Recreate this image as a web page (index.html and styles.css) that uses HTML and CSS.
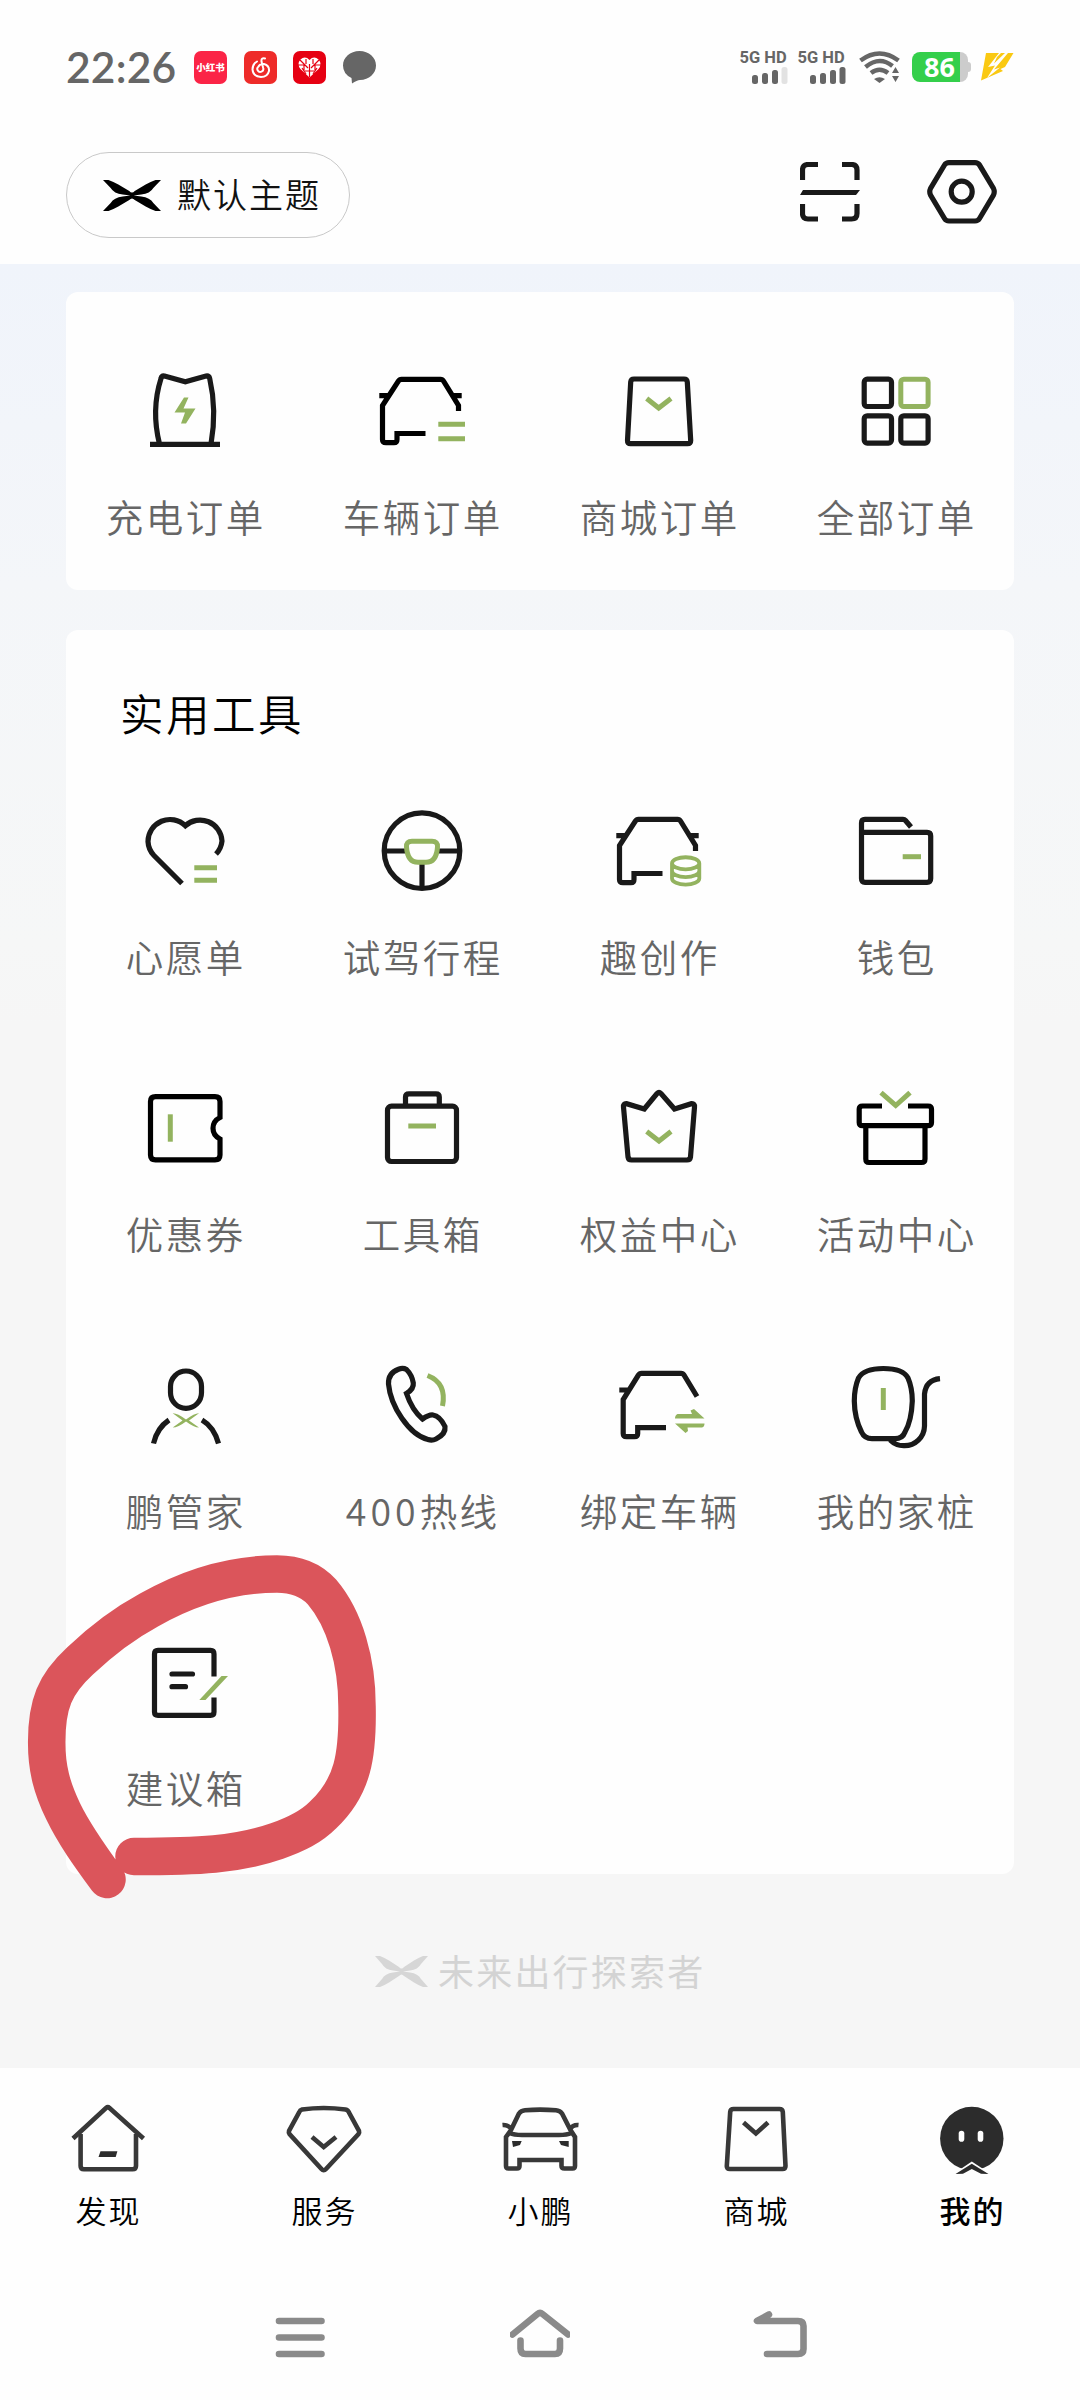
FILE: index.html
```html
<!DOCTYPE html>
<html lang="zh-CN">
<head>
<meta charset="utf-8">
<title>我的</title>
<link rel="stylesheet" href="styles.css">
</head>
<body>
<div class="screen">
  <header class="header">
    <div class="status">
      <span class="clock">22:26</span>
      <div class="notices">
        <span class="app app-note">小红书</span>
        <span class="app app-music"><svg width="33" height="33" viewBox="0 0 33 33"><path d="M21 7.5Q17 6.500 17.500 10.500L19.200 17A3 3 0 1 1 14.500 15.500Q16 12.500 20 13Q25.500 14.500 25 20Q23.500 26 17 26Q9 25.500 8.500 18.500Q8.500 13 13 10.500" class="app-line"/></svg></span>
        <span class="app app-heart"><svg width="33" height="33" viewBox="0 0 33 33"><path d="M16.500 9Q12 4.500 7.500 8.500Q3.500 13 7.500 18L16.500 26.500L25.500 18Q29.500 13 25.500 8.500Q21 4.500 16.500 9Z" fill="#fff"/><path d="M7 9L15 17M26 9L18 17M5 14H11V20M28 14H22V20M13 8V13M20 8V13M16.500 13V26M12 20H21M9 17L13 23M24 17L20 23" stroke="#e60012" stroke-width="1.200" fill="none"/></svg></span>
        <svg width="33" height="33" viewBox="0 0 33 33"><path d="M16.500 0C26 0 33 6.500 33 14.500S26 29 17 29Q14 29 9 32.500L8.500 27Q0 23 0 14.500C0 6.500 7 0 16.500 0Z" fill="#666"/></svg>
      </div>
      <div class="signals">
        <div class="sim"><span>5G HD</span><svg width="36" height="17" viewBox="0 0 36 17"><g fill="#666"><rect x="0" y="8" width="6" height="9" rx="2.500"/><rect x="10" y="6" width="6" height="11" rx="2.500"/><rect x="20" y="3" width="6" height="14" rx="2.500"/></g><rect x="29.500" y="0" width="6" height="17" rx="2.500" fill="#e2e2e2"/></svg></div>
        <div class="sim"><span>5G HD</span><svg width="36" height="17" viewBox="0 0 36 17"><g fill="#666"><rect x="0" y="8" width="6" height="9" rx="2.500"/><rect x="10" y="6" width="6" height="11" rx="2.500"/><rect x="20" y="3" width="6" height="14" rx="2.500"/><rect x="29.500" y="0" width="6" height="17" rx="2.500"/></g></svg></div>
        <svg class="wifi" width="42" height="32" viewBox="0 0 42 32"><g fill="none" stroke="#666" stroke-width="4.500"><path d="M1.500 9.500Q20.500 -4.500 39.500 9.500"/><path d="M6.500 16Q20.500 4.500 33.500 15"/><path d="M12 22Q20.500 15.500 29 22"/></g><path d="M15 28Q20.500 24.500 26 28L20.500 32ZM36.500 16L40 22H33ZM36.500 31L33 25H40Z" fill="#666"/></svg>
        <div class="battery"><span>86</span></div>
        <svg width="34" height="28" viewBox="0 0 34 28"><path d="M5 0H32.500L24 14L19.500 16L22 18L0 27.500Z" fill="#fac912"/><path d="M18 0L7 14L14 12.500L6 25L19 14.500L13 16.500L27 0H24L13 10.500L16 4L20 0Z" fill="#fefefe"/></svg>
      </div>
    </div>
    <div class="toolbar">
      <button class="theme"><svg width="58" height="31" viewBox="0 0 53 31" preserveAspectRatio="none"><path d="M0 0H5Q10 2 14 4.500L24 11Q26.500 14 29 11L39 4.500Q43 2 48 0H53L46 8Q43 13.500 35 14.500L28 15.500L35 16.500Q43 17.500 46 23L53 31H48Q43 29 39 26.500L29 20Q26.500 17 24 20L14 26.500Q10 29 5 31H0L7 23Q10 17.500 18 16.500L25 15.500L18 14.500Q10 13.500 7 8Z"/></svg><span>默认主题</span></button>
      <svg class="scan" width="60" height="60" viewBox="0 0 60 60"><path d="M2.500 18V8Q2.500 2.500 8 2.500H18M42 2.500H51.500Q57 2.500 57 8V18M57 42V51.500Q57 57 51.500 57H42M18 57H8Q2.500 57 2.500 51.500V42"/><path class="solid" d="M0 33L3 28H60L56 33Z"/></svg>
      <svg class="settings" width="70" height="64" viewBox="0 0 70 64"><path d="M22 2.600H48Q51 2.600 52.500 5L66.500 28.500Q68 31.700 66.500 35L52.500 58.500Q51 61 48 61H22Q19 61 17.500 58.500L3.500 35Q2 31.700 3.500 28.500L17.500 5Q19 2.600 22 2.600Z"/><circle cx="34.700" cy="31.700" r="10.500"/></svg>
    </div>
  </header>

  <main class="content">
    <section class="card orders">
      <div class="grid">
        <div class="cell"><svg class="icon" viewBox="0 0 101 100"><path d="M25.500 82Q17 48 27 16.500Q27.700 13.500 30.500 14L51.300 19.700L72 14Q75 13.500 75.700 16.500Q83 48 77 82M16 82.300H86"/><path class="gf" d="M50 35.500H54.500L49.500 46.500H61.500L52 61.500H47L51 50.500H40.500Z"/></svg><span>充电订单</span></div>
        <div class="cell"><svg class="icon black" viewBox="0 0 101 100"><path d="M87.500 49V43.500L72.500 19Q71.500 17.300 69.500 17.300H30.500Q28.500 17.300 27.500 19L11.500 43.500V77.500Q11.500 80.700 15 80.700H23Q26 80.700 26 77.500V71.500H54.500M8.300 33.700H18M81 33.700H90.700"/><path class="g" d="M67.300 62.300H94M67.300 76.700H94"/></svg><span>车辆订单</span></div>
        <div class="cell"><svg class="icon" viewBox="0 0 101 100"><path d="M26 17H76Q79 17 79.300 20L82.700 78.500Q82.700 81.700 79.500 81.700H22.500Q19.300 81.700 19.500 78.500L22.700 20Q23 17 26 17Z"/><path class="g" d="M38.700 36.500L50.700 46L63 36.500"/></svg><span>商城订单</span></div>
        <div class="cell"><svg class="icon" viewBox="0 0 101 100"><rect x="19.200" y="17.200" width="27.300" height="27.300" rx="3"/><rect class="g" x="55.800" y="17.200" width="27.300" height="27.300" rx="3"/><rect x="19.200" y="53.800" width="27.300" height="27.300" rx="3"/><rect x="55.800" y="53.800" width="27.300" height="27.300" rx="3"/></svg><span>全部订单</span></div>
      </div>
    </section>

    <section class="card tools">
      <h2>实用工具</h2>
      <div class="grid">
        <div class="cell"><svg class="icon" viewBox="0 0 101 100"><path d="M82 52A22 22 0 0 0 88 39A22 22 0 0 0 51.300 23.700A22 22 0 0 0 14 39.500A22 22 0 0 0 20 53.500L48 81.500"/><path class="g" d="M60.300 65.700H83M60.300 78.300H83"/></svg><span>心愿单</span></div>
        <div class="cell"><svg class="icon" viewBox="0 0 101 100"><circle cx="51" cy="48.700" r="37.800"/><path d="M14 49H35M67 49H88M51 61V86"/><path class="g" d="M41 39.300H61Q67 39.300 66.500 45Q65.500 60.300 55 60.300H47Q36.500 60.300 35.500 45Q35 39.300 41 39.300Z"/></svg><span>试驾行程</span></div>
        <div class="cell"><svg class="icon" viewBox="0 0 101 100"><path d="M87.500 49V43.500L72.500 19Q71.500 17.300 69.500 17.300H30.500Q28.500 17.300 27.500 19L11.500 43.500V77.500Q11.500 80.700 15 80.700H23Q26 80.700 26 77.500V71.500H54.500M8.300 33.700H18M81 33.700H90.700"/><path class="g coins" d="M64 61.300A13.500 6 0 0 1 91.300 61.300A13.500 6 0 0 1 64 61.300V76.500A13.500 6 0 0 0 91.300 76.500V61.300M64 69A13.500 6 0 0 0 91.300 69"/></svg><span>趣创作</span></div>
        <div class="cell"><svg class="icon" viewBox="0 0 101 100"><path d="M66 25L60.500 18.500Q59.500 17.300 58 17.300H20Q16.500 17.300 16.500 21V76.500Q16.500 80.300 20 80.300H82Q85.700 80.300 85.700 76.500V34Q85.700 30.300 82 30.300H17"/><path class="g" d="M57.700 54.700H76"/></svg><span>钱包</span></div>

        <div class="cell"><svg class="icon black" viewBox="0 0 101 100"><path d="M21.500 17.700H81Q86 17.700 86 22.500V38.500Q79 42 79 49.300Q79 56.500 86 60V76Q86 80.800 81 80.800H21.500Q16.500 80.800 16.500 76V22.500Q16.500 17.700 21.500 17.700Z"/><path class="g" d="M36.300 35.300V62.700"/></svg><span>优惠券</span></div>
        <div class="cell"><svg class="icon" viewBox="0 0 101 100"><rect x="16.500" y="27.200" width="69" height="55.300" rx="4"/><path d="M34.500 27V18Q34.500 14.800 38 14.800H65Q68.300 14.800 68.300 18V27"/><path class="g" d="M37.300 47H65"/></svg><span>工具箱</span></div>
        <div class="cell"><svg class="icon" viewBox="0 0 101 100"><path d="M49 14.500Q51 12.500 53 14.500L66.500 30L83.500 24.700Q87 24.500 86.500 28L82.500 78Q82 81 79 81H23.500Q20.500 81 20 78L15.500 28Q15 24.500 18.500 24.700L36.300 30Z"/><path class="g" d="M38.700 52.500L51 62L63 52.500"/></svg><span>权益中心</span></div>
        <div class="cell"><svg class="icon black" viewBox="0 0 101 100"><path d="M37 27H17.500Q14.200 27 14.200 30V43.500Q14.200 46.700 17.500 46.700H83Q86.500 46.700 86.500 43.500V30Q86.500 27 83 27H63M20.800 47V80Q20.800 83.500 24 83.500H76.500Q80 83.500 80 80V47"/><path class="g" d="M36 13.700L50.700 26.500L65 13.700"/></svg><span>活动中心</span></div>

        <div class="cell"><svg class="icon" viewBox="0 0 101 100"><rect x="36.500" y="15" width="31" height="37.300" rx="15.500"/><path d="M35 64Q23 72 19.500 87.500M68 64Q80 71 84.500 87.500"/><path class="gf" d="M38.700 57.300Q43 57 52 63.500Q61 57 65 57.300L55 64.500L65 71.500Q60 71.500 52 65.500Q44 71.500 38.700 71.500L48.500 64.500Z"/></svg><span>鹏管家</span></div>
        <div class="cell"><svg class="icon" viewBox="0 0 101 100"><path d="M27.500 13.200Q17 17 17.500 28C19.500 50 38 79 57 83.500Q61 85 65 83Q75 78 74 70.500Q69 60 62 59Q58 58.500 51.500 63Q41 54 35.500 37.500Q43 33 42.300 27Q41 19 35.500 13.500Q32 11.500 27.500 13.200Z"/><path class="g" d="M56.500 19.500Q76 27 71.500 50"/></svg><span><b class="digits">400</b>热线</span></div>
        <div class="cell"><svg class="icon" viewBox="0 0 101 100"><path d="M89 40.500L76 19Q75 17.300 73 17.300H33.500Q31.500 17.300 30.500 19L15.200 43.500V77.500Q15.200 80.700 18.500 80.700H26.500Q29.700 80.700 29.700 77.500V71.700H58M11.300 34H21"/><path class="gf" d="M69.500 58H84L82.500 54.500L86 53L96.500 62.500H67Q67 59 69.500 58ZM67 67.500H96.500Q96.500 71 94 71.500H79.500L80 75L77.500 77Z"/></svg><span>绑定车辆</span></div>
        <div class="cell"><svg class="icon" viewBox="0 0 101 100"><path d="M38.300 12.500C53 12.500 60 16 63 22Q67.300 32 67.300 45Q66.500 65 60 76Q57.500 82.700 50 82.700H27Q19.500 82.700 16.500 76Q9.500 62 9.300 45Q9.300 32 13.500 22C17 16 24 12.500 38.300 12.500Z"/><path d="M45 84Q51 89.800 59 89.700A20 20 0 0 0 79.500 70V38Q81 24 95 22.700"/><path class="g" d="M38.300 32V54"/></svg><span>我的家桩</span></div>

        <div class="cell"><svg class="icon" viewBox="0 0 101 100"><path d="M80 43.500V21Q80 17.300 76.500 17.300H24Q20.500 17.300 20.500 21V79Q20.500 82.300 24 82.300H76.500Q80 82.300 80 79V64.500"/><path d="M38 41H58.500M38 53.700H51.500" stroke-linecap="round"/><path class="gf" d="M65.300 67L87.500 43H94L71.500 67Z"/></svg><span>建议箱</span></div>
      </div>
      <svg class="marker" width="380" height="370" viewBox="10 1540 380 370"><path d="M107 1879.500C89 1855 74 1834 63 1811C52 1788 46.700 1769 46.700 1743C46.500 1704 55 1684 80 1661C100 1642 125 1623 149 1610C193 1585 237 1574 277 1574C296 1574 311 1580 322 1592C345 1619 357 1662 357 1706C358 1755 353 1787 323 1815C311 1827 297 1834 277 1841C237 1855 198 1856.500 134 1856.500"/></svg>
    </section>

    <div class="slogan"><svg width="53" height="31" viewBox="0 0 53 31"><path d="M0 0H5Q10 2 14 4.500L24 11Q26.500 14 29 11L39 4.500Q43 2 48 0H53L46 8Q43 13.500 35 14.500L28 15.500L35 16.500Q43 17.500 46 23L53 31H48Q43 29 39 26.500L29 20Q26.500 17 24 20L14 26.500Q10 29 5 31H0L7 23Q10 17.500 18 16.500L25 15.500L18 14.500Q10 13.500 7 8Z"/></svg><span>未来出行探索者</span></div>
  </main>

  <nav class="tabs">
    <div class="tab"><svg viewBox="0 0 80 76"><path d="M12.600 34V66Q12.600 69.300 16 69.300H64.500Q68 69.300 68 66V34"/><path d="M5 38.500L38 8Q39.800 6.500 41.500 8L75.500 38.500"/><path class="solid" d="M30.500 57L32.500 51.300H49.400L47.700 57Z"/></svg><span>发现</span></div>
    <div class="tab"><svg viewBox="0 0 80 76"><path d="M18 9.500Q39.700 6.500 61.500 9.500Q64 10 65 12.500L75 31Q75.500 32.500 74.500 34L42 69Q39.700 71.500 37.500 69L5.500 34Q4.500 32.500 5 31L15 12.500Q16 10 18 9.500Z"/><path d="M28 37L39.700 47L52 37"/></svg><span>服务</span></div>
    <div class="tab"><svg viewBox="0 0 80 76"><path d="M11 30L19 13.500Q21 10.500 25 10.200Q40 9 56 10.200Q60 10.500 62 13.500L70.500 30L75 37V66Q75 68.500 72.500 68.500H64.500Q61.500 68.500 61.500 66V60H19.500V66Q19.500 68.500 17 68.500H8.500Q6 68.500 6 66V37Z"/><path d="M9.500 33Q14 35 22 35H59Q67 35 71.500 33M11.500 29Q8 24.500 2.500 25M70 29Q73 24.500 78.500 25"/><path class="solid" d="M12 41H21.700L20 45L13 47ZM59 41H68.700V47L61 45Z"/></svg><span>小鹏</span></div>
    <div class="tab"><svg viewBox="0 0 80 76"><path d="M17.500 9H63.500Q66.500 9 66.800 12L69.500 66Q69.500 69 66.500 69H13.800Q10.700 69 10.800 66L14.200 12Q14.500 9 17.500 9Z"/><path d="M27.500 22.500L39.900 33.500L52 22.500"/></svg><span>商城</span></div>
    <div class="tab active"><svg viewBox="0 0 80 76"><circle class="solid" cx="39.800" cy="38.500" r="31.700"/><path class="eye" d="M22 73.500L39.800 61.500L58 73.500V76H22Z"/><path class="chin" d="M23.500 74L39.800 63.800L56.500 74L49 73.700L39.800 69L31 73.700Z"/><rect class="eye" x="26.700" y="30.700" width="5.600" height="11" rx="2.800"/><rect class="eye" x="45.700" y="30.700" width="5.600" height="11" rx="2.800"/></svg><span>我的</span></div>
  </nav>

  <div class="sysnav">
    <svg width="60" height="60" viewBox="0 0 60 60"><path d="M9 16H51.500M9 32.500H51.500M9 49H51.500"/></svg>
    <svg width="60" height="60" viewBox="0 0 60 60"><path d="M2.500 29.500L27.500 9Q30 7 32.500 9L58 29.500M10.500 35.500V43.500Q10.500 49 15.500 49H45Q50 49 50 43.500V35.500"/></svg>
    <svg width="60" height="60" viewBox="0 0 60 60"><path d="M19 9.500L7 16H48Q53.500 16 53.500 21V44Q53.500 49 48 49H17"/></svg>
  </div>
</div>
</body>
</html>
```
FILE: styles.css
```css
* { box-sizing: border-box; }
body {
  margin: 0;
  font-family: "Noto Sans", "Noto Sans CJK SC", sans-serif;
  color: #000;
}
svg { display: block; flex: none; }
.screen {
  width: 1080px;
  height: 2400px;
  display: flex;
  flex-direction: column;
  background: #fefefe;
}

/* header */
.header { height: 264px; padding: 46px 0 0 66px; }
.status { display: flex; align-items: center; height: 42px; }
.clock {
  width: 128px;
  font: 600 42.500px/42px Lato, sans-serif;
  color: #666;
  letter-spacing: .2px;
}
.notices { display: flex; gap: 16.5px; align-items: center; }
.app {
  display: flex;
  align-items: center;
  justify-content: center;
  width: 33px;
  height: 33px;
  border-radius: 7px;
}
.app-note { background: #fb2446; color: #fff; font: 900 9.500px/33px "Noto Sans CJK SC", sans-serif; white-space: nowrap; }
.app-music { background: #ee2b29; }
.app-line { fill: none; stroke: #fff; stroke-width: 2; stroke-linecap: round; }
.app-heart { background: #e60012; }
.signals { display: flex; align-items: center; margin-left: 364px; }
.sim { width: 58px; height: 33px; display: flex; flex-direction: column; }
.sim span { font: 700 16.500px/13px Roboto, sans-serif; color: #666; height: 17px; white-space: nowrap; }
.sim svg { margin-left: 12px; }
.wifi { margin: 0 11px 0 3px; }
.battery {
  display: flex;
  position: relative;
  width: 56px;
  height: 30px;
  margin-right: 13px;
  border-radius: 8px;
  background: linear-gradient(90deg, #34cf4b 48px, #ccc 48px);
}
.battery::after {
  content: "";
  position: absolute;
  left: 56px;
  top: 10px;
  width: 3px;
  height: 10px;
  border-radius: 0 3px 3px 0;
  background: #ccc;
}
.battery span {
  width: 56px;
  text-align: center;
  font: 700 27px/30px "Open Sans", sans-serif;
  color: #fff;
}

.toolbar { display: flex; align-items: center; height: 86px; margin-top: 64px; }
.theme {
  display: flex;
  align-items: center;
  width: 284px;
  height: 86px;
  padding: 0 0 0 36px;
  gap: 16px;
  border: 1px solid #c9c9c9;
  border-radius: 43px;
  background: #fefefe;
  font: 350 34px/50px "Noto Sans CJK SC", sans-serif;
  letter-spacing: 2px;
  color: #111;
  white-space: nowrap;
}
.theme span { margin-top: -3px; }
.scan, .settings { fill: none; stroke: #191919; stroke-width: 5.200; }
.scan { margin: -7px 67px 0 450px; }
.settings { margin-top: -6px; }
.scan .solid { fill: #191919; stroke: none; }

/* content */
.content {
  height: 1804px;
  padding: 28px 66px 0;
  background: linear-gradient(#f0f4fb 0, #f4f6f9 320px, #f6f7f7 680px, #f6f6f6 760px);
}
.card { background: #fefefe; border-radius: 12px; }
.orders { height: 298px; padding-top: 70px; margin-bottom: 40px; }
.tools { position: relative; height: 1244px; padding-top: 49px; }
.tools h2 {
  margin: 0 0 55px;
  padding-left: 54px;
  font: 350 43.500px/68px "Noto Sans CJK SC", sans-serif;
  letter-spacing: 2.500px;
}
.grid { display: grid; grid-template-columns: repeat(4, 237px); grid-auto-rows: 277px; }
.cell { display: flex; flex-direction: column; align-items: center; gap: 24px; }
.cell span {
  font: 350 37.500px/60px "Noto Sans CJK SC", sans-serif;
  letter-spacing: 2.500px;
  margin-right: -2.500px;
  color: #666;
}
.digits { font-weight: 350; letter-spacing: 4px; }
.icon { width: 101px; height: 100px; fill: none; stroke: #191919; stroke-width: 5.200; }
.icon.black { stroke: #000; }
.icon .g { stroke: #93b35f; stroke-width: 5; }
.icon .coins { stroke-width: 3.800; }
.icon .gf { fill: #93b35f; stroke: none; }
.marker { position: absolute; left: -56px; top: 910px; }
.marker path { fill: none; stroke: #db555b; stroke-width: 37.500; stroke-linecap: round; stroke-linejoin: round; }

.slogan {
  display: flex;
  align-items: center;
  margin: 72px 0 0 309px;
  height: 50px;
  gap: 10px;
  font: 400 36px/50px "Noto Sans CJK SC", sans-serif;
  letter-spacing: 2.200px;
  color: #d3d3d3;
}
.slogan span { margin-top: -3px; }
.slogan svg { fill: #d6d6d6; }

/* bottom tabs */
.tabs { display: grid; grid-template-columns: repeat(5, 216px); height: 200px; padding-top: 32px; }
.tab { display: flex; flex-direction: column; align-items: center; gap: 9px; }
.tab svg { width: 80px; height: 76px; fill: none; stroke: #383838; stroke-width: 4.600; }
.tab .solid, .tab .chin { fill: #2c2c2c; stroke: none; }
.tab .eye { fill: #fefefe; stroke: none; }
.tab span {
  font: 350 31px/50px "Noto Sans CJK SC", sans-serif;
  letter-spacing: 2px;
  margin-right: -1px;
}
.tab.active span { font-weight: 500; }

.sysnav { display: flex; justify-content: center; gap: 180px; padding-top: 37px; }
.sysnav svg { fill: none; stroke: #8a8a8a; stroke-width: 6.600; stroke-linecap: round; stroke-linejoin: round; }
```
